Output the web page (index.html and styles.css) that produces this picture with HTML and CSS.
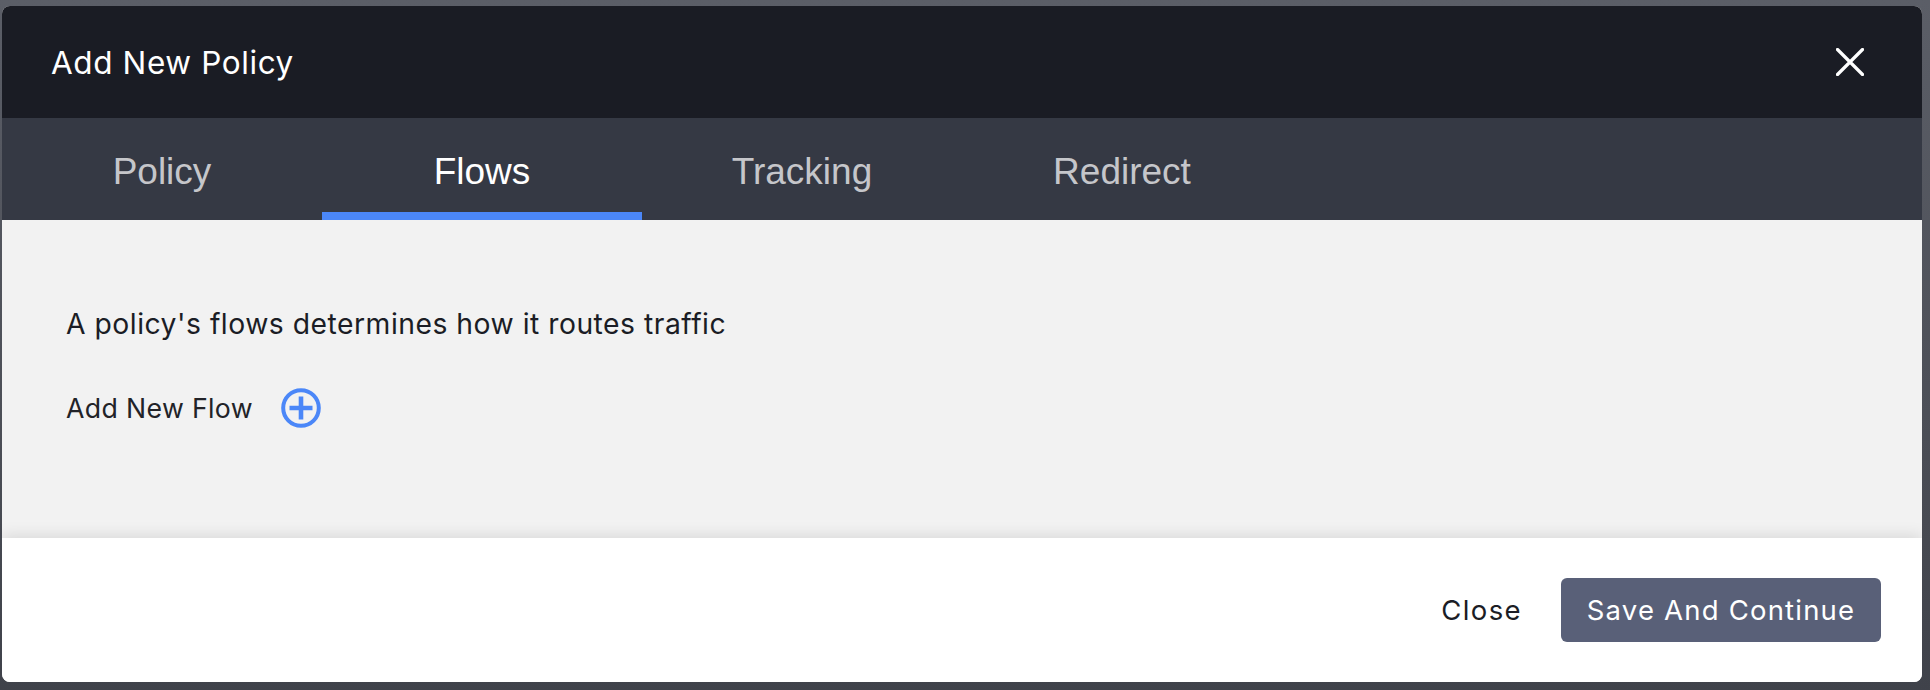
FILE: index.html
```html
<!DOCTYPE html>
<html lang="en">
<head>
<meta charset="utf-8">
<title>Add New Policy</title>
<link rel="stylesheet" href="styles.css">
</head>
<body>
<div class="backdrop">
  <div class="modal">
    <header class="modal-header">
      <h1 class="modal-title">Add New Policy</h1>
      <button class="icon-close" aria-label="Close">
        <svg width="28" height="28" viewBox="0 0 28 28"><path d="M1.5 1.5 L26.5 26.5 M26.5 1.5 L1.5 26.5" stroke="#fff" stroke-width="3.2" stroke-linecap="round" fill="none"/></svg>
      </button>
    </header>
    <nav class="tabs">
      <div class="tab">Policy</div>
      <div class="tab tab-active">Flows</div>
      <div class="tab">Tracking</div>
      <div class="tab">Redirect</div>
    </nav>
    <section class="modal-body">
      <p class="intro">A policy's flows determines how it routes traffic</p>
      <div class="add-row">
        <span class="add-label">Add New Flow</span>
        <button class="add-btn" aria-label="Add New Flow">
          <svg width="40" height="40" viewBox="0 0 40 40"><circle cx="20" cy="20" r="17.8" fill="none" stroke="#4b87f8" stroke-width="4"/><path d="M20 8.5 V31.5 M8.5 20 H31.5" stroke="#4b87f8" stroke-width="4.6" fill="none"/></svg>
        </button>
      </div>
    </section>
    <footer class="modal-footer">
      <button class="btn-text">Close</button>
      <button class="btn-primary">Save And Continue</button>
    </footer>
  </div>
</div>
</body>
</html>
```

FILE: styles.css
```css
* { box-sizing: border-box; }
html, body { margin: 0; padding: 0; }
body {
  width: 1930px;
  height: 690px;
  overflow: hidden;
  font-family: Inter, "Noto Sans", sans-serif;
}
.backdrop {
  height: 690px;
  padding: 6px 8px 8px 2px;
  background: linear-gradient(180deg, #5b5e67 0%, #4c4f57 60%, #3f424a 100%);
}
.modal {
  width: 1920px;
  height: 676px;
  border-radius: 8px;
  overflow: hidden;
  display: flex;
  flex-direction: column;
  background: #ffffff;
}
.modal-header {
  height: 112px;
  flex: none;
  background: #1a1c24;
  display: flex;
  align-items: center;
  justify-content: space-between;
  padding: 0 58px 0 49px;
}
.modal-title {
  margin: 0;
  font-size: 31.5px;
  font-weight: 400;
  color: #ffffff;
  letter-spacing: 0.6px;
  line-height: 40px;
  padding-top: 2px;
}
.icon-close {
  width: 28px;
  height: 28px;
  padding: 0;
  border: 0;
  background: none;
  display: flex;
}
.tabs {
  height: 102px;
  flex: none;
  display: flex;
  background: #353944;
}
.tab {
  width: 320px;
  display: flex;
  align-items: center;
  justify-content: center;
  padding-top: 5px;
  font-family: "Liberation Sans", Arial, sans-serif;
  font-size: 37px;
  color: #c5c6ca;
}
.tab-active {
  color: #ffffff;
  box-shadow: inset 0 -8px 0 #4b87f8;
}
.modal-body {
  height: 318px;
  flex: none;
  background: #f2f2f2;
  padding: 87px 64px 0 64px;
}
.intro {
  margin: 0;
  font-size: 28.3px;
  line-height: 34px;
  color: #1b1d25;
  letter-spacing: 0.5px;
}
.add-row {
  margin-top: 47px;
  display: flex;
  align-items: center;
  gap: 28px;
  height: 40px;
}
.add-label {
  font-size: 26.7px;
  line-height: 32px;
  color: #222328;
  letter-spacing: 0.35px;
}
.add-btn {
  width: 40px;
  height: 40px;
  padding: 0;
  border: 0;
  background: none;
  display: flex;
}
.modal-footer {
  flex: 1;
  display: flex;
  align-items: center;
  justify-content: flex-end;
  gap: 39px;
  padding: 0 41px 0 0;
  background: #ffffff;
  box-shadow: 0 -3px 14px rgba(0, 0, 0, 0.10);
  position: relative;
}
.btn-text {
  border: 0;
  background: none;
  padding: 0;
  font-family: Inter, "Noto Sans", sans-serif;
  font-size: 27.5px;
  color: #1b1d25;
  letter-spacing: 1.4px;
}
.btn-primary {
  width: 320px;
  height: 64px;
  border: 0;
  border-radius: 6px;
  background: #596078;
  color: #ffffff;
  font-family: Inter, "Noto Sans", sans-serif;
  font-size: 27.5px;
  letter-spacing: 1.2px;
}
```
